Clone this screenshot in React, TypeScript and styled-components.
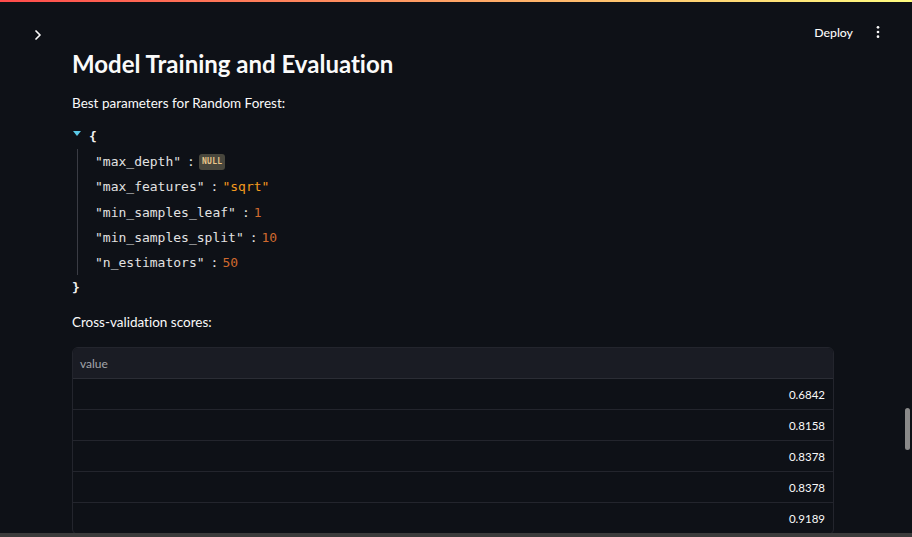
import React from "react";
import styled, { createGlobalStyle } from "styled-components";

const Global = createGlobalStyle`
  html, body { margin: 0; padding: 0; background: #0e1117; }
  body { font-family: Lato, "Open Sans", sans-serif; color: #fafafa; overflow: hidden; font-variant-ligatures: none; }
  * { box-sizing: border-box; }
`;

const Page = styled.div`
  width: 912px;
  height: 537px;
  background: #0e1117;
  overflow: hidden;
  position: relative;
`;

const Decoration = styled.div`
  height: 2px;
  background: linear-gradient(90deg, rgb(255, 75, 75), rgb(255, 253, 128));
`;

const Header = styled.header`
  height: 46px;
  padding: 14px 26px 0 30px;
  display: flex;
  align-items: center;
  justify-content: space-between;
`;

const IconButton = styled.button<{ $dy?: number }>`
  background: none;
  border: none;
  padding: 0;
  display: flex;
  align-items: center;
  justify-content: center;
  color: #fafafa;
  cursor: pointer;
  margin-top: ${(p) => p.$dy ?? 0}px;
`;

const Actions = styled.div`
  display: flex;
  align-items: center;
  gap: 17px;
`;

const DeployButton = styled.button`
  background: none;
  border: none;
  color: #fafafa;
  font-family: Lato, "Open Sans", sans-serif;
  font-size: 12.3px;
  font-weight: 500;
  padding: 0;
`;

const Main = styled.main`
  width: 762px;
  margin-left: 72px;
  display: flex;
  flex-direction: column;
`;

const Title = styled.h1`
  margin: 0;
  font-size: 24px;
  line-height: 32px;
  font-weight: 700;
  color: #fafafa;
`;

const Label = styled.p<{ $mt: number }>`
  margin: ${(p) => p.$mt}px 0 0;
  font-size: 13.5px;
  line-height: 20px;
  font-weight: 400;
  color: #fafafa;
`;

const Json = styled.div`
  margin-top: 11px;
  font-family: "DejaVu Sans Mono", "Liberation Mono", monospace;
  font-size: 13px;
  color: #e2e2e2;
`;

const JsonLine = styled.div`
  height: 25.2px;
  display: flex;
  align-items: center;
`;

const Toggle = styled.span`
  width: 0;
  height: 0;
  border-left: 4px solid transparent;
  border-right: 4px solid transparent;
  border-top: 5px solid #5ac8e6;
  margin: -6px 8px 0 1px;
`;

const Brace = styled.span`
  font-weight: 700;
  color: #f0f0f0;
`;

const Body = styled.div`
  margin-left: 5px;
  padding-left: 17px;
  border-left: 1px solid #3a3c44;
`;

const Colon = styled.span`
  margin: 0 4px 0 6px;
`;

const StringVal = styled.span`
  color: #f39a1e;
`;

const NumVal = styled.span`
  color: #d0692e;
`;

const NullBadge = styled.span`
  display: inline-flex;
  align-items: center;
  height: 16px;
  padding: 0 3px;
  border-radius: 3px;
  background: #48473d;
  color: #e9c68a;
  font-size: 8px;
  font-weight: 700;
  letter-spacing: 0.3px;
`;

const Table = styled.div`
  margin-top: 15px;
  border: 1px solid #23252d;
  border-radius: 6px;
  overflow: hidden;
`;

const HeadRow = styled.div`
  height: 31px;
  background: #1a1c24;
  display: flex;
  align-items: center;
  padding-left: 7px;
  font-size: 12px;
  color: #a3a5ab;
  border-bottom: 1px solid #2b2d35;
`;

const Row = styled.div`
  height: 31px;
  display: flex;
  align-items: center;
  justify-content: flex-end;
  padding-right: 8px;
  font-size: 11.5px;
  color: #fafafa;
  border-bottom: 1px solid #23252d;
`;

const ScrollThumb = styled.div`
  position: fixed;
  right: 2px;
  top: 408px;
  width: 5px;
  height: 42px;
  border-radius: 3px;
  background: #8a8a8a;
`;

const HScroll = styled.div`
  position: fixed;
  left: 0;
  right: 0;
  bottom: 0;
  height: 4px;
  background: #3c3c3c;
`;

type Entry = { key: string; kind: "null" | "str" | "num"; value?: string };

const params: Entry[] = [
  { key: "max_depth", kind: "null" },
  { key: "max_features", kind: "str", value: "sqrt" },
  { key: "min_samples_leaf", kind: "num", value: "1" },
  { key: "min_samples_split", kind: "num", value: "10" },
  { key: "n_estimators", kind: "num", value: "50" },
];

const scores = ["0.6842", "0.8158", "0.8378", "0.8378", "0.9189"];

export default function App() {
  return (
    <Page>
      <Global />
      <Decoration />
      <Header>
        <IconButton $dy={5} aria-label="Expand sidebar">
          <svg width="16" height="16" viewBox="0 0 24 24" fill="none" stroke="#fafafa" strokeWidth="2.6" strokeLinecap="round" strokeLinejoin="round">
            <path d="M9 6l6 6-6 6" />
          </svg>
        </IconButton>
        <Actions>
          <DeployButton>Deploy</DeployButton>
          <IconButton aria-label="Main menu">
            <svg width="16" height="16" viewBox="0 0 24 24" fill="#fafafa">
              <circle cx="12" cy="5" r="2" />
              <circle cx="12" cy="12" r="2" />
              <circle cx="12" cy="19" r="2" />
            </svg>
          </IconButton>
        </Actions>
      </Header>
      <Main>
        <Title>Model Training and Evaluation</Title>
        <Label $mt={13}>Best parameters for Random Forest:</Label>
        <Json>
          <JsonLine>
            <Toggle />
            <Brace>{"{"}</Brace>
          </JsonLine>
          <Body>
            {params.map((p) => (
              <JsonLine key={p.key}>
                <span>"{p.key}"</span>
                <Colon>:</Colon>
                {p.kind === "null" && <NullBadge>NULL</NullBadge>}
                {p.kind === "str" && <StringVal>"{p.value}"</StringVal>}
                {p.kind === "num" && <NumVal>{p.value}</NumVal>}
              </JsonLine>
            ))}
          </Body>
          <JsonLine>
            <Brace>{"}"}</Brace>
          </JsonLine>
        </Json>
        <Label $mt={12}>Cross-validation scores:</Label>
        <Table>
          <HeadRow>value</HeadRow>
          {scores.map((s, i) => (
            <Row key={i}>{s}</Row>
          ))}
        </Table>
      </Main>
      <ScrollThumb />
      <HScroll />
    </Page>
  );
}
